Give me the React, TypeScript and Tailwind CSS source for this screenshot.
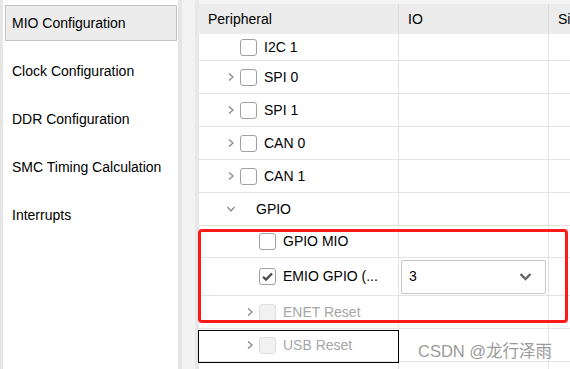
const FONT = "font-['Liberation_Sans',Arial,sans-serif]";

const SIDEBAR = ['MIO Configuration', 'Clock Configuration', 'DDR Configuration', 'SMC Timing Calculation', 'Interrupts'];

type Row = {
  name: string;
  h: string;
  indent: 0 | 1;
  caret?: 'right' | 'down';
  box?: 'off' | 'on' | 'disabled';
  io?: string;
};

const ROWS: Row[] = [
  { name: 'I2C 1', h: 'h-[27px]', indent: 0, box: 'off' },
  { name: 'SPI 0', h: 'h-[33px]', indent: 0, caret: 'right', box: 'off' },
  { name: 'SPI 1', h: 'h-[33px]', indent: 0, caret: 'right', box: 'off' },
  { name: 'CAN 0', h: 'h-[33px]', indent: 0, caret: 'right', box: 'off' },
  { name: 'CAN 1', h: 'h-[33px]', indent: 0, caret: 'right', box: 'off' },
  { name: 'GPIO', h: 'h-[33px]', indent: 0, caret: 'down' },
  { name: 'GPIO MIO', h: 'h-[32px]', indent: 1, box: 'off' },
  { name: 'EMIO GPIO (...', h: 'h-[38px]', indent: 1, box: 'on', io: '3' },
  { name: 'ENET Reset', h: 'h-[33px]', indent: 1, caret: 'right', box: 'disabled' },
  { name: 'USB Reset', h: 'h-[33px]', indent: 1, caret: 'right', box: 'disabled' },
  { name: '', h: 'h-[33px]', indent: 1 },
];

function Caret({ dir }: { dir: 'right' | 'down' }) {
  return (
    <svg width="10" height="10" viewBox="0 0 10 10" className="shrink-0">
      {dir === 'right' ? (
        <polyline points="3,1.5 7,5 3,8.5" fill="none" stroke="#8a8a8a" strokeWidth="1.3" />
      ) : (
        <polyline points="1.5,3 5,7 8.5,3" fill="none" stroke="#8a8a8a" strokeWidth="1.3" />
      )}
    </svg>
  );
}

function Box({ state }: { state: 'off' | 'on' | 'disabled' }) {
  const cls =
    state === 'disabled'
      ? 'border-[#dedede] bg-[#f1f1f1]'
      : 'border-[#a0a0a0] bg-white';
  return (
    <div className={`w-[17px] h-[17px] rounded-[3px] border-[1.5px] shrink-0 flex items-center justify-center ${cls}`}>
      {state === 'on' && (
        <svg width="13" height="13" viewBox="0 0 13 13">
          <polyline points="2,6.8 5,9.6 11,3.4" fill="none" stroke="#4a4a4a" strokeWidth="2.2" />
        </svg>
      )}
    </div>
  );
}

function PeripheralCell({ row }: { row: Row }) {
  const dim = row.box === 'disabled';
  return (
    <div className={`w-[199px] shrink-0 flex items-center ${row.indent ? 'pl-[46px]' : 'pl-[27px]'}`}>
      <div className="w-[14px] flex justify-start">{row.caret && <Caret dir={row.caret} />}</div>
      {row.box ? <Box state={row.box} /> : <div className="w-[9px]" />}
      <span className={`ml-[7px] text-[14px] ${dim ? 'text-[#a6a6a6]' : 'text-black'}`}>{row.name}</span>
    </div>
  );
}

export default function App() {
  return (
    <div className={`relative w-[570px] h-[369px] overflow-hidden flex bg-[#f3f3f3] ${FONT}`}>
      {/* left nav */}
      <div className="w-[3px] bg-[#e6e6e6]" />
      <div className="w-[175px] bg-white pt-[5px] pl-[2px] pr-[1px] flex flex-col">
        {SIDEBAR.map((s, i) => (
          <div
            key={s}
            className={`h-[36px] mb-[12px] flex items-center pl-[6px] text-[14px] text-black ${
              i === 0 ? 'bg-[#ececec] border border-[#c4c4c4]' : 'border border-transparent'
            }`}
          >
            {s}
          </div>
        ))}
      </div>
      <div className="w-[4px] bg-[#e5e5e5]" />
      <div className="w-[13px] bg-[#f3f3f3]" />
      <div className="w-[4px] bg-[#e8e8e8]" />

      {/* table */}
      <div className="flex-1 bg-white flex flex-col min-w-0 pt-[4px] bg-[linear-gradient(#f5f5f5_4px,white_4px)]">
        <div className="h-[30px] bg-[#ececec] flex items-center text-[14px] text-black shrink-0">
          <div className="w-[199px] pl-[9px] shrink-0">Peripheral</div>
          <div className="w-[150px] pl-[9px] shrink-0 h-full flex items-center border-l border-[#dcdcdc]">IO</div>
          <div className="flex-1 pl-[9px] h-full flex items-center border-l border-[#dcdcdc] whitespace-nowrap overflow-hidden">Si</div>
        </div>
        {ROWS.map((r, i) => (
          <div key={i} className={`${r.h} shrink-0 flex border-b border-[#e3e3e3]`}>
            <PeripheralCell row={r} />
            <div className="w-[150px] shrink-0 border-l border-[#e3e3e3] flex items-center px-[2px]">
              {r.io && (
                <div className="w-[146px] h-[34px] border-[1.5px] border-[#c8c8c8] rounded-[2px] bg-white flex items-center justify-between pl-[7px] pr-[13px] text-[14px] text-black">
                  <span>{r.io}</span>
                  <svg width="13" height="9" viewBox="0 0 13 9">
                    <polyline points="1.5,2 6.5,7 11.5,2" fill="none" stroke="#666" strokeWidth="2.4" />
                  </svg>
                </div>
              )}
            </div>
            <div className="flex-1 border-l border-[#e3e3e3]" />
          </div>
        ))}
      </div>

      {/* highlight overlays */}
      <div className="absolute left-[198px] top-[229px] w-[370px] h-[94px] border-[3px] border-[#ff1a1a] rounded-[4px] pointer-events-none" />
      <div className="absolute left-[198px] top-[330px] w-[201px] h-[33px] border-[1.5px] border-black pointer-events-none" />
      <div className="absolute left-[418px] top-[339px] text-[16.5px] text-[#9a9a9a] font-['Liberation_Sans','Noto_Sans_CJK_SC',sans-serif] whitespace-nowrap">
        CSDN @龙行泽雨
      </div>
    </div>
  );
}
